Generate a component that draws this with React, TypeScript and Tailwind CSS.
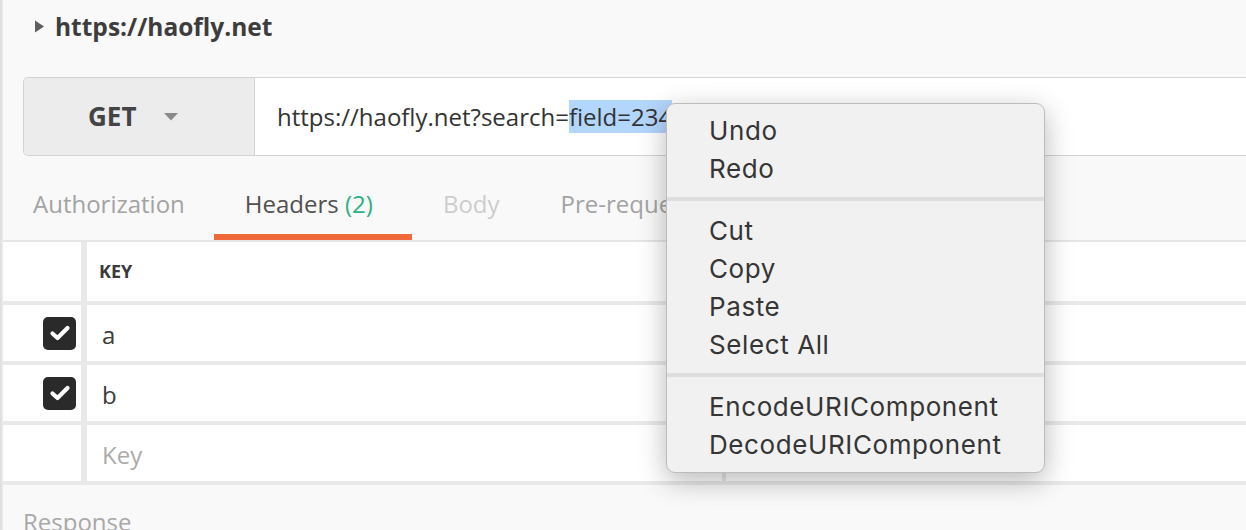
import React from "react";

function Check() {
  return (
    <div className="w-[33px] h-[33px] rounded-[5px] bg-[#2a2a2a] flex items-center justify-center">
      <svg width="22" height="18" viewBox="0 0 22 18">
        <path d="M3.5 9.5 L8.5 14 L18.5 4" fill="none" stroke="#fff" strokeWidth="4.2" strokeLinecap="round" strokeLinejoin="round" />
      </svg>
    </div>
  );
}

function Row({ check, children, h = "h-[56px]" }: { check?: boolean; children: React.ReactNode; h?: string }) {
  return (
    <div className={`flex shrink-0 ${h} bg-white`}>
      <div className="w-[84px] shrink-0 box-border flex items-center justify-end pr-[5px] border-r-[6px] border-[#e9e9e9]">
        {check ? <Check /> : null}
      </div>
      <div className="w-[639px] shrink-0 box-border flex items-center border-r-[4px] border-[#e9e9e9]">{children}</div>
      <div className="flex-1" />
    </div>
  );
}

const menuItem = "h-[38px] flex items-center pl-[42px]";

export default function App() {
  return (
    <div className="relative w-[1246px] h-[530px] overflow-hidden bg-[#f9f9f9] flex font-['Open_Sans',sans-serif] text-[#333]">
      <div className="w-[3px] shrink-0 bg-[linear-gradient(to_right,#dcdcdc,#ececec)]" />
      <div className="flex-1 flex flex-col">
        {/* Title */}
        <div className="h-[53px] shrink-0 flex items-center pl-[31px] gap-[10px]">
          <svg width="11" height="13" viewBox="0 0 11 13">
            <path d="M1 0.5 L10 6.5 L1 12.5 Z" fill="#5e5e5e" />
          </svg>
          <span className="text-[24.5px] font-bold text-[#3d3d3d] leading-[33px]">https://haofly.net</span>
        </div>
        {/* URL bar */}
        <div className="mt-[24px] shrink-0 ml-[20px] h-[79px] flex border border-[#d3d3d3] border-r-0 rounded-l-[5px] overflow-hidden">
          <div className="w-[231px] bg-[#ececec] border-r border-[#d3d3d3] flex items-center pl-[64px] gap-[28px]">
            <span className="text-[26px] font-bold text-[#444]">GET</span>
            <svg width="14" height="8" viewBox="0 0 14 8">
              <path d="M0 0 L14 0 L7 7.5 Z" fill="#8a8a8a" />
            </svg>
          </div>
          <div className="flex-1 bg-white flex items-center pl-[22px] text-[24px] text-[#333]">
            <span className="leading-[33px]">
              https://haofly.net?search=<span className="bg-[#b3d6fd]">field=234</span>
            </span>
          </div>
        </div>
        {/* Tabs */}
        <div className="h-[86px] shrink-0 flex border-b-2 border-[#e5e5e5] text-[24px]">
          <div className="pl-[30px] pr-[29px] pt-[31px] leading-[33px] text-[#a3a3a3]">Authorization</div>
          <div className="pl-[31px] pr-[39px] pt-[31px] leading-[33px] text-[#505050] border-b-[6px] border-[#f0693a] h-[84px] box-border">
            Headers <span className="text-[#2cb27f]">(2)</span>
          </div>
          <div className="px-[31px] pt-[31px] leading-[33px] text-[#cdcdcd]">Body</div>
          <div className="px-[30px] pt-[31px] leading-[33px] text-[#a3a3a3]">Pre-request Script</div>
        </div>
        {/* Table */}
        <div className="flex flex-col shrink-0 gap-[4px] bg-[#e9e9e9] pb-[4px]">
          <Row h="h-[59px]">
            <span className="pl-[12px] text-[18px] font-bold text-[#3a3a3a]">KEY</span>
          </Row>
          <Row check>
            <span className="pl-[15px] pt-[4px] text-[24px] text-[#3a3a3a]">a</span>
          </Row>
          <Row check>
            <span className="pl-[15px] pt-[4px] text-[24px] text-[#3a3a3a]">b</span>
          </Row>
          <Row>
            <span className="pl-[15px] pt-[4px] text-[24px] text-[#ababab]">Key</span>
          </Row>
        </div>
        {/* Response */}
        <div className="pl-[20px] pt-[20px] shrink-0 text-[24px] leading-[33px] text-[#a8a8a8]">Response</div>
      </div>

      {/* Context menu */}
      <div className="absolute left-[666px] top-[103px] w-[379px] h-[370px] bg-[#f1f1f1] border border-[#bcbcbc] rounded-[9px] shadow-[0_8px_28px_rgba(0,0,0,0.28)] pt-[7px] font-['Inter',sans-serif] text-[26px] tracking-[0.6px] text-[#353535]">
        <div className={menuItem}>Undo</div>
        <div className={menuItem}>Redo</div>
        <div className="h-[24px] flex items-center"><div className="h-[4px] w-full bg-[#dedede]" /></div>
        <div className={menuItem}>Cut</div>
        <div className={menuItem}>Copy</div>
        <div className={menuItem}>Paste</div>
        <div className={menuItem}>Select All</div>
        <div className="h-[24px] flex items-center"><div className="h-[4px] w-full bg-[#dedede]" /></div>
        <div className={menuItem}>EncodeURIComponent</div>
        <div className={menuItem}>DecodeURIComponent</div>
      </div>
    </div>
  );
}
